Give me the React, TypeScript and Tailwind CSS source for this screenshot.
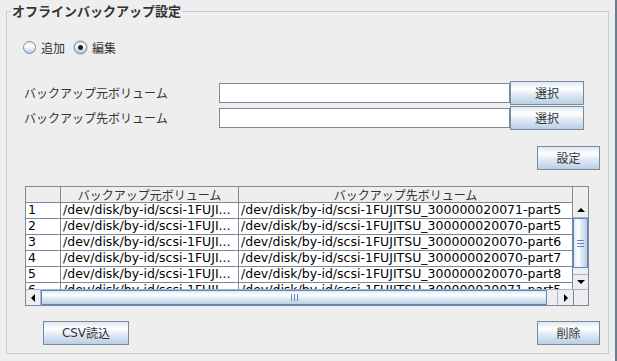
import React from "react";

const GRAD =
  "bg-[linear-gradient(180deg,#dde8f3_0%,#ffffff_30%,#dde8f3_60%,#b8cfe5_100%)]";

function Btn({ children, className }: { children: React.ReactNode; className: string }) {
  return (
    <div
      className={`flex items-center justify-center border border-[#7a8a99] ${GRAD} text-[12px] leading-none text-[#333333] ${className}`}
    >
      {children}
    </div>
  );
}

function Radio({ checked, label }: { checked: boolean; label: string }) {
  return (
    <div className="flex items-center">
      <div
        className={`flex h-[13px] w-[13px] items-center justify-center rounded-full border border-[#7a8a99] bg-[linear-gradient(180deg,#dde8f3_0%,#ffffff_35%,#b8cfe5_100%)] ${
          checked ? "ring-1 ring-[#b8cfe5]" : ""
        }`}
      >
        {checked && <div className="h-[5px] w-[5px] rounded-full bg-[#222222]" />}
      </div>
      <span className="ml-[5px] text-[12px] leading-none text-[#333333]">{label}</span>
    </div>
  );
}

const rows = [
  ["1", "300000020071-part5"],
  ["2", "300000020070-part5"],
  ["3", "300000020070-part6"],
  ["4", "300000020070-part7"],
  ["5", "300000020070-part8"],
  ["6", "300000020071-part5"],
];

function Arrow({ dir }: { dir: "up" | "down" | "left" | "right" }) {
  const paths: Record<string, string> = {
    up: "M0 4 L4 0 L8 4 Z",
    down: "M0 0 L8 0 L4 4 Z",
    left: "M4 0 L4 8 L0 4 Z",
    right: "M0 0 L4 4 L0 8 Z",
  };
  const vert = dir === "up" || dir === "down";
  return (
    <svg width={vert ? 8 : 4} height={vert ? 4 : 8} viewBox={vert ? "0 0 8 4" : "0 0 4 8"}>
      <path d={paths[dir]} fill="#000000" />
    </svg>
  );
}

const LAT = "font-['DejaVu_Sans','Noto_Sans_CJK_JP',sans-serif] text-[12.5px]";

export default function App() {
  return (
    <div className="flex h-[361px] w-[617px] overflow-hidden bg-[#eeeeee] font-['Noto_Sans_CJK_JP','Noto_Sans',sans-serif]">
      <div className="relative ml-[6px] mt-[11px] flex h-[343px] w-[603px] flex-col border border-[#b8cfe5]">
        <div className="absolute left-[4px] top-[-9px] bg-[#eeeeee] px-[1px] text-[13px] font-bold leading-[16px] text-[#333333]">
          オフラインバックアップ設定
        </div>

        {/* radios */}
        <div className="ml-[16px] mt-[29px] flex h-[13px] items-center gap-[9px]">
          <Radio checked={false} label="追加" />
          <Radio checked={true} label="編集" />
        </div>

        {/* fields */}
        <div className="ml-[17px] mt-[27px] flex flex-col gap-[1px]">
          {["バックアップ元ボリューム", "バックアップ先ボリューム"].map((l) => (
            <div key={l} className="flex h-[24px] items-center">
              <div className="w-[195px] text-[12px] leading-none text-[#333333]">{l}</div>
              <div className="h-[20px] w-[291px] border border-[#7a8a99] bg-white" />
              <Btn className="h-[24px] w-[74px]">選択</Btn>
            </div>
          ))}
        </div>

        <Btn className="mr-[8px] mt-[16px] h-[24px] w-[63px] self-end">設定</Btn>

        {/* table */}
        <div className="ml-[18px] mt-[16px] flex h-[120px] w-[564px] flex-col border border-[#7a8a99] bg-[#eeeeee] text-[12px] text-black">
          <div className="flex h-[16px]">
            <div className="h-[16px] w-[35px] border-b border-r border-[#7a8a99]" />
            <div className="flex h-[16px] w-[178px] items-center justify-center border-b border-r border-[#7a8a99] leading-none text-[#333333]">
              バックアップ元ボリューム
            </div>
            <div className="flex h-[16px] w-[334px] items-center justify-center border-b border-r border-[#7a8a99] leading-none text-[#333333]">
              バックアップ先ボリューム
            </div>
            <div className="h-[16px] w-[15px]" />
          </div>
          <div className="flex h-[86px]">
            <div className={`h-[86px] w-[547px] overflow-hidden bg-white ${LAT}`}>
              {rows.map(([n, tail]) => (
                <div key={n} className="flex h-[16px]">
                  <div className="flex h-[16px] w-[35px] items-center border-b border-r border-[#7a8a99] pl-[2px] leading-none">
                    {n}
                  </div>
                  <div className="flex h-[16px] w-[178px] items-center overflow-hidden whitespace-nowrap border-b border-r border-[#7a8a99] pl-[2px] leading-none">
                    /dev/disk/by-id/scsi-1FUJI...
                  </div>
                  <div className="flex h-[16px] w-[334px] items-center overflow-hidden whitespace-nowrap border-b border-r border-[#7a8a99] pl-[2px] leading-none">
                    /dev/disk/by-id/scsi-1FUJITSU_{tail}
                  </div>
                </div>
              ))}
            </div>
            {/* vertical scrollbar */}
            <div className="flex h-[86px] w-[15px] flex-col bg-[#eeeeee]">
              <div className="flex h-[15px] items-center justify-center border-b border-[#a3b8cc] bg-[#eeeeee]">
                <Arrow dir="up" />
              </div>
              <div className="flex h-[50px] items-center justify-center border border-[#6382bf] bg-[linear-gradient(90deg,#dde8f3_0%,#ffffff_30%,#dde8f3_60%,#b8cfe5_100%)]">
                <div className="flex flex-col gap-[2px]">
                  <div className="h-[1px] w-[7px] bg-[#6382bf]" />
                  <div className="h-[1px] w-[7px] bg-[#6382bf]" />
                  <div className="h-[1px] w-[7px] bg-[#6382bf]" />
                </div>
              </div>
              <div className="h-[6px]" />
              <div className="flex h-[15px] items-center justify-center border-t border-[#a3b8cc] bg-[#eeeeee]">
                <Arrow dir="down" />
              </div>
            </div>
          </div>
          {/* horizontal scrollbar */}
          <div className="flex h-[16px] border-t border-[#a3b8cc]">
            <div className="flex h-[15px] w-[15px] items-center justify-center border-r border-[#a3b8cc]">
              <Arrow dir="left" />
            </div>
            <div className={`flex h-[15px] w-[506px] items-center justify-center border border-[#6382bf] ${GRAD}`}>
              <div className="flex gap-[2px]">
                <div className="h-[7px] w-[1px] bg-[#6382bf]" />
                <div className="h-[7px] w-[1px] bg-[#6382bf]" />
                <div className="h-[7px] w-[1px] bg-[#6382bf]" />
              </div>
            </div>
            <div className="w-[10px]" />
            <div className="flex h-[15px] w-[16px] items-center justify-center border-l border-[#a3b8cc]">
              <Arrow dir="right" />
            </div>
            <div className="h-[15px] w-[15px] border-l border-[#7a8a99]" />
          </div>
        </div>

        {/* bottom buttons */}
        <div className="mt-[15px] flex">
          <Btn className="ml-[36px] h-[24px] w-[86px]">
            <span className="font-['DejaVu_Sans',sans-serif]">CSV</span>
            <span>読込</span>
          </Btn>
          <Btn className="ml-auto mr-[8px] h-[24px] w-[63px]">削除</Btn>
        </div>
      </div>
      <div className="ml-auto h-full w-[2px] bg-[#6b7d8f]" />
    </div>
  );
}
